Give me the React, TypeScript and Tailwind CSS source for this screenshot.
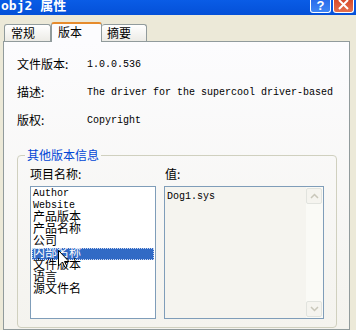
const items = ["Author", "Website", "产品版本", "产品名称", "公司", "内部名称", "文件版本", "语言", "源文件名"];

const Row = ({ label, value }: { label: string; value: string }) => (
  <div className="h-[28px] flex items-center">
    <span className="w-[70px] shrink-0">{label}</span>
    <span className="font-['Liberation_Mono',monospace] text-[10px] whitespace-nowrap">{value}</span>
  </div>
);

export default function App() {
  return (
    <div className="relative w-[356px] h-[330px] overflow-hidden bg-[#ECE9D8] flex flex-col text-[12px] text-black font-['Noto_Sans_CJK_SC',sans-serif]">
      {/* title bar, top cut off */}
      <div className="h-[15px] shrink-0 flex items-start justify-between bg-gradient-to-b from-[#0A5CE6] to-[#0450D8]">
        <span className="text-white font-bold text-[13px] leading-[11px] pl-[1px] font-['DejaVu_Sans_Mono','Noto_Sans_CJK_SC',monospace]">obj2 属性</span>
        <div className="flex gap-[2px] pr-[2px]">
          <div className="w-[21px] h-[13px] border border-t-0 border-white rounded-b-[3px] bg-gradient-to-b from-[#2A6CEB] to-[#3F86F5] flex items-start justify-center">
            <span className="text-white font-bold text-[13px] leading-[11px] font-['Liberation_Sans',sans-serif]">?</span>
          </div>
          <div className="w-[21px] h-[13px] border border-t-0 border-white rounded-b-[3px] bg-gradient-to-b from-[#D84A2A] to-[#E4704E] flex items-start justify-center">
            <svg width="11" height="10" viewBox="0 0 11 10">
              <path d="M1 0 L10 9 M10 0 L1 9" stroke="white" strokeWidth="2" />
            </svg>
          </div>
        </div>
      </div>

      {/* tabs */}
      <div className="h-[26px] shrink-0 flex items-end pl-[4px] relative z-10">
        <div className="w-[47px] h-[17px] border border-b-0 border-[#919B9C] rounded-t-[3px] bg-gradient-to-b from-white to-[#ECEBE6] flex items-center pl-[6px]">常规</div>
        <div className="w-[51px] h-[20px] -mb-[1px] border border-b-0 border-[#919B9C] border-t-[#E68B2C] border-t-2 rounded-t-[3px] bg-[#FCFCFE] flex items-center pl-[6px] pb-[2px]">版本</div>
        <div className="w-[45px] h-[17px] border border-b-0 border-l-0 border-[#919B9C] rounded-t-[3px] bg-gradient-to-b from-white to-[#ECEBE6] flex items-center pl-[5px]">摘要</div>
      </div>

      {/* tab page */}
      <div className="flex-1 ml-[3px] mr-[6px] border border-[#919B9C] bg-gradient-to-b from-[#FCFCFE] to-[#F4F3EE] pl-[13px] pt-[8px]">
        <Row label="文件版本:" value="1.0.0.536" />
        <Row label="描述:" value="The driver for the supercool driver-based" />
        <Row label="版权:" value="Copyright" />

        <fieldset className="mt-[14px] w-[318px] border border-[#D0D0BF] rounded-[4px]">
          <legend className="ml-[7px] px-[2px] text-[#0046D5] leading-[14px]">其他版本信息</legend>
          <div className="flex gap-[8px] px-[12px] pb-[8px]">
            <div className="flex flex-col">
              <div className="h-[24px] flex items-center">项目名称:</div>
              <div className="relative w-[126px] h-[133px] border border-[#7F9DB9] bg-white p-[1px]">
                {items.map((it, i) => (
                  <div
                    key={it}
                    className={
                      i === 5
                        ? "h-[12px] leading-[12px] pl-[1px] bg-[#316AC5] text-white outline outline-1 outline-dotted outline-[#CED8F0] -outline-offset-1 font-['Liberation_Mono','Noto_Sans_CJK_SC',monospace] text-[12px]"
                        : "h-[12px] leading-[12px] pl-[1px] font-['Liberation_Mono','Noto_Sans_CJK_SC',monospace] " + (i < 2 ? "text-[10px]" : "text-[12px]")
                    }
                  >
                    {it}
                  </div>
                ))}
              </div>
            </div>
            <div className="flex flex-col">
              <div className="h-[24px] flex items-center pl-[1px]">值:</div>
              <div className="w-[160px] h-[133px] border border-[#7F9DB9] bg-[#F5F4EF] flex">
                <div className="flex-1 pl-[2px] pt-[4px] font-['Liberation_Mono',monospace] text-[10px] leading-[12px]">Dog1.sys</div>
                <div className="w-[17px] flex flex-col justify-between bg-[#FAFAF6] py-[1px] pr-[1px]">
                  <div className="h-[16px] border border-[#E1E3DE] rounded-[2px] bg-[#F5F4EF] flex items-center justify-center">
                    <svg width="9" height="6" viewBox="0 0 9 6"><path d="M1 5 L4.5 1.5 L8 5" fill="none" stroke="#C9C7BA" strokeWidth="1.5" /></svg>
                  </div>
                  <div className="h-[16px] border border-[#E1E3DE] rounded-[2px] bg-[#F5F4EF] flex items-center justify-center">
                    <svg width="9" height="6" viewBox="0 0 9 6"><path d="M1 1 L4.5 4.5 L8 1" fill="none" stroke="#C9C7BA" strokeWidth="1.5" /></svg>
                  </div>
                </div>
              </div>
            </div>
          </div>
        </fieldset>
      </div>

      {/* mouse pointer */}
      <svg className="absolute left-[58px] top-[250px] z-20" width="12" height="19" viewBox="0 0 12 19">
        <path d="M0.5 0.5 L0.5 16 L4.5 12 L7 17.5 L9 16.5 L6.5 11.5 L11 11.5 Z" fill="white" stroke="black" strokeWidth="1" />
      </svg>
    </div>
  );
}
